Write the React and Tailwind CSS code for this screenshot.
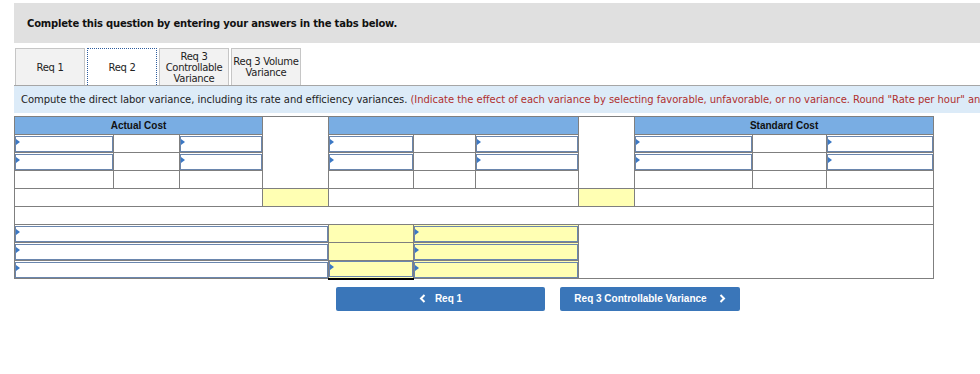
const font = { fontFamily: '"DejaVu Sans", Verdana, sans-serif' };

function Arrow() {
  return (
    <span className="absolute left-0 top-[2px] w-0 h-0 border-y-[3px] border-y-transparent border-l-[4px] border-l-[#3b78c4]" />
  );
}

function InputCell({ colSpan = 1, yellow = false, arrow = true, dark = false }) {
  return (
    <td
      colSpan={colSpan}
      className={`p-0 h-[18px] border ${dark ? 'border-t-black border-b-2 border-b-black border-x-[#7f7f7f]' : 'border-[#7f7f7f]'} ${yellow ? 'bg-[#ffffb3]' : 'bg-white'}`}
    >
      <div className="relative h-[16px] border border-[#6a86ae]">{arrow && <Arrow />}</div>
    </td>
  );
}

function Cell({ colSpan = 1, rowSpan = 1, yellow = false, topDark = false }) {
  return (
    <td
      colSpan={colSpan}
      rowSpan={rowSpan}
      className={`p-0 h-[18px] border border-[#7f7f7f] ${topDark ? 'border-t-black' : ''} ${yellow ? 'bg-[#ffffb3]' : 'bg-white'}`}
    />
  );
}

function Tab({ label, active }) {
  return (
    <div
      className={`w-[70px] h-[37px] flex items-center justify-center text-center whitespace-nowrap tracking-[-0.3px] text-[10px] leading-[11px] text-[#222] ${
        active ? 'bg-white border border-dotted border-[#2f5d9e] border-b-0' : 'bg-[#f2f2f2] border border-[#c6c6c6] border-b-0'
      }`}
    >
      {label}
    </div>
  );
}

export default function App() {
  const widths = [99, 66, 83, 66, 85, 62, 103, 56, 118, 74, 107];
  return (
    <div className="w-[980px] h-[374px] overflow-hidden bg-white" style={font}>
      <div className="ml-[14px] w-[1100px] pt-[3px]">
        <div className="h-[40px] bg-[#e0e0e0] pl-[13px] flex items-center">
          <span className="text-[10px] font-bold tracking-[-0.2px] text-[#111]">
            Complete this question by entering your answers in the tabs below.
          </span>
        </div>

        <div className="mt-[5px] pl-[1px] flex gap-[2px] border-b border-[#a6a6a6]">
          <Tab label="Req 1" />
          <Tab label="Req 2" active />
          <Tab label={<>Req 3<br />Controllable<br />Variance</>} />
          <Tab label={<>Req 3 Volume<br />Variance</>} />
        </div>

        <div className="h-[27px] bg-[#dcebf8] pl-[7px] flex items-center whitespace-nowrap text-[10px] tracking-[-0.05px] text-[#222]">
          Compute the direct labor variance, including its rate and efficiency variances.&nbsp;
          <span className="text-[#b0302e]">
            (Indicate the effect of each variance by selecting favorable, unfavorable, or no variance. Round "Rate per hour" answers to 2 decimal places.)
          </span>
        </div>

        <table
          className="mt-[3px] border-collapse table-fixed w-[919px]"
          style={{ fontFamily: '"Liberation Sans", Arial, sans-serif' }}
        >
          <colgroup>
            {widths.map((w, i) => (
              <col key={i} style={{ width: w }} />
            ))}
          </colgroup>
          <tbody>
            <tr>
              <th colSpan={3} className="h-[18px] p-0 border border-[#7f7f7f] bg-[#79ade3] text-[10px] font-bold text-[#111]">
                Actual Cost
              </th>
              <Cell rowSpan={4} />
              <th colSpan={3} className="p-0 border border-[#7f7f7f] bg-[#79ade3]" />
              <Cell rowSpan={4} />
              <th colSpan={3} className="p-0 border border-[#7f7f7f] bg-[#79ade3] text-[10px] font-bold text-[#111]">
                Standard Cost
              </th>
            </tr>
            {[0, 1].map((r) => (
              <tr key={r}>
                <InputCell />
                <Cell />
                <InputCell />
                <InputCell />
                <Cell />
                <InputCell />
                <InputCell />
                <Cell />
                <InputCell />
              </tr>
            ))}
            <tr>
              <Cell />
              <Cell topDark />
              <Cell />
              <Cell />
              <Cell />
              <Cell />
              <Cell />
              <Cell />
              <Cell />
            </tr>
            <tr>
              <Cell colSpan={3} />
              <Cell yellow />
              <Cell colSpan={3} />
              <Cell yellow />
              <Cell colSpan={3} />
            </tr>
            <tr>
              <Cell colSpan={11} />
            </tr>
            <tr>
              <InputCell colSpan={4} />
              <Cell yellow />
              <InputCell colSpan={2} yellow />
              <Cell colSpan={4} rowSpan={3} />
            </tr>
            <tr>
              <InputCell colSpan={4} />
              <Cell yellow />
              <InputCell colSpan={2} yellow />
            </tr>
            <tr>
              <InputCell colSpan={4} />
              <InputCell yellow dark />
              <InputCell colSpan={2} yellow />
            </tr>
          </tbody>
        </table>

        <div
          className="mt-[7px] ml-[322px] flex gap-[15px] text-[10px] font-bold text-white"
          style={{ fontFamily: '"Liberation Sans", Arial, sans-serif' }}
        >
          <button className="w-[209px] h-[24px] rounded-[2px] bg-[#3a76b9] flex items-center justify-center gap-[9px]">
            <svg width="7" height="9" viewBox="0 0 7 9" fill="none" stroke="white" strokeWidth="2">
              <path d="M5.5 1 L2 4.5 L5.5 8" />
            </svg>
            <span>Req 1</span>
          </button>
          <button className="w-[180px] h-[24px] rounded-[2px] bg-[#3a76b9] flex items-center justify-center gap-[12px]">
            <span>Req 3 Controllable Variance</span>
            <svg width="7" height="9" viewBox="0 0 7 9" fill="none" stroke="white" strokeWidth="2">
              <path d="M1.5 1 L5 4.5 L1.5 8" />
            </svg>
          </button>
        </div>
      </div>
    </div>
  );
}
